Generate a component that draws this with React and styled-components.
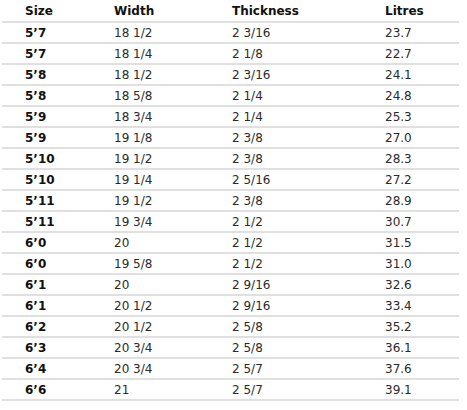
import React from "react";
import styled, { createGlobalStyle } from "styled-components";

const GlobalStyle = createGlobalStyle`
  body {
    margin: 0;
    background: #fff;
    font-family: "DejaVu Sans", "Liberation Sans", sans-serif;
  }
`;

const Table = styled.div`
  width: 457px;
  margin-left: 2px;
  display: grid;
  grid-template-columns: 91px 118px 153px 1fr;
`;

const Cell = styled.div`
  height: 21px;
  box-sizing: border-box;
  padding-left: ${p => (p.$first ? 23 : 21)}px;
  padding-top: 1px;
  display: flex;
  align-items: center;
  border-bottom: 2px solid #e0e0e0;
  font-size: 12px;
  color: ${p => (p.$bold ? "#111" : "#2a2a2a")};
  font-weight: ${p => (p.$bold ? 700 : 400)};
  white-space: nowrap;
`;

const HeadCell = styled(Cell)`
  height: 23px;
  padding-top: 1px;
  color: #111;
  font-weight: 700;
`;

const rows = [
  ["5’7", "18 1/2", "2 3/16", "23.7"],
  ["5’7", "18 1/4", "2 1/8", "22.7"],
  ["5’8", "18 1/2", "2 3/16", "24.1"],
  ["5’8", "18 5/8", "2 1/4", "24.8"],
  ["5’9", "18 3/4", "2 1/4", "25.3"],
  ["5’9", "19 1/8", "2 3/8", "27.0"],
  ["5’10", "19 1/2", "2 3/8", "28.3"],
  ["5’10", "19 1/4", "2 5/16", "27.2"],
  ["5’11", "19 1/2", "2 3/8", "28.9"],
  ["5’11", "19 3/4", "2 1/2", "30.7"],
  ["6’0", "20", "2 1/2", "31.5"],
  ["6’0", "19 5/8", "2 1/2", "31.0"],
  ["6’1", "20", "2 9/16", "32.6"],
  ["6’1", "20 1/2", "2 9/16", "33.4"],
  ["6’2", "20 1/2", "2 5/8", "35.2"],
  ["6’3", "20 3/4", "2 5/8", "36.1"],
  ["6’4", "20 3/4", "2 5/7", "37.6"],
  ["6’6", "21", "2 5/7", "39.1"],
];

const headers = ["Size", "Width", "Thickness", "Litres"];

export default function App() {
  return (
    <>
      <GlobalStyle />
      <Table>
        {headers.map((h, i) => (
          <HeadCell key={h} $first={i === 0}>
            {h}
          </HeadCell>
        ))}
        {rows.map((r, ri) =>
          r.map((v, ci) => (
            <Cell key={ri + "-" + ci} $first={ci === 0} $bold={ci === 0}>
              {v}
            </Cell>
          ))
        )}
      </Table>
    </>
  );
}
